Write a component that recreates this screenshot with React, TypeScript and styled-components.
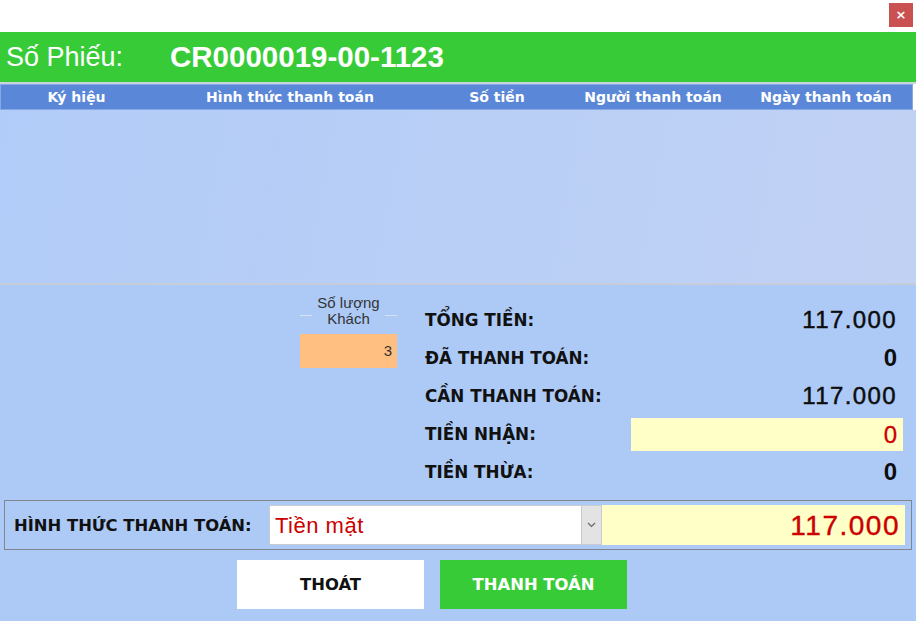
import React from "react";
import styled, { createGlobalStyle } from "styled-components";

const Global = createGlobalStyle`
  html, body { margin: 0; padding: 0; background: #ffffff; }
  body { font-family: "Liberation Sans", Arial, sans-serif; }
  * { box-sizing: border-box; }
`;

const Window = styled.div`
  width: 916px;
  height: 621px;
  display: flex;
  flex-direction: column;
  background: #ffffff;
  overflow: hidden;
`;

const TitleBar = styled.div`
  height: 32px;
  display: flex;
  justify-content: flex-end;
  align-items: flex-start;
  padding: 3px 3px 0 0;
`;

const CloseButton = styled.button`
  width: 24px;
  height: 24px;
  border: none;
  padding: 0;
  background: #c95151;
  color: #ffffff;
  font-family: "DejaVu Sans", sans-serif;
  font-weight: bold;
  font-size: 13px;
  line-height: 24px;
  text-align: center;
`;

const Header = styled.div`
  height: 50px;
  background: #38cb38;
  display: flex;
  align-items: center;
  padding-left: 6px;
  color: #ffffff;
  border-bottom: 2px solid #c9d3dc;
  box-sizing: content-box;
`;

const HeaderLabel = styled.span`
  font-size: 27px;
  width: 164px;
`;

const HeaderValue = styled.span`
  font-size: 29.5px;
  font-weight: bold;
`;

const TableHeader = styled.div`
  height: 26px;
  margin-right: 3px;
  background: #5a87d7;
  border: 1px solid #86a8e6;
  display: grid;
  grid-template-columns: 151px 276px 138px 174px 1fr;
  align-items: center;
`;

const HeadCell = styled.div`
  text-align: center;
  color: #ffffff;
  font-family: "DejaVu Sans", sans-serif;
  font-weight: bold;
  font-size: 14px;
  line-height: 24px;
`;

const TableBody = styled.div`
  height: 173px;
  background: linear-gradient(100deg, #b1ccf8 0%, #b9cff6 50%, #c1d1f4 100%);
  border-bottom: 2px solid #c6ccd8;
  box-sizing: content-box;
`;

const Panel = styled.div`
  flex: 1;
  background: #adcaf7;
  display: flex;
  flex-direction: column;
  padding-top: 10px;
`;

const Summary = styled.div`
  display: flex;
  align-items: flex-start;
  padding-left: 300px;
  padding-right: 13px;
`;

const QtyGroup = styled.div`
  width: 97px;
  display: flex;
  flex-direction: column;
  align-items: stretch;
`;

const QtyTitle = styled.div`
  position: relative;
  text-align: center;
  font-size: 15px;
  line-height: 16px;
  color: #333333;
  &::before, &::after {
    content: "";
    position: absolute;
    top: 20px;
    width: 12px;
    height: 1px;
    background: #d8e2f2;
  }
  &::before { left: 0; }
  &::after { right: 0; }
`;

const QtyInput = styled.div`
  margin-top: 7px;
  height: 34px;
  background: #ffbf80;
  color: #333333;
  font-size: 15px;
  text-align: right;
  padding: 8px 5px 0 0;
`;

const Totals = styled.div`
  flex: 1;
  margin-left: 28px;
  margin-top: 6px;
  display: flex;
  flex-direction: column;
`;

const TotalRow = styled.div`
  height: 38px;
  display: flex;
  align-items: center;
  justify-content: space-between;
`;

const TotalLabel = styled.span`
  font-family: "DejaVu Sans", sans-serif;
  font-weight: bold;
  font-size: 16.8px;
  color: #111111;
`;

const TotalValue = styled.span<{ $bold?: boolean }>`
  width: 272px;
  text-align: right;
  padding-right: 6px;
  font-size: 24px;
  letter-spacing: ${(p) => (p.$bold ? "0" : "1.4px")};
  font-weight: ${(p) => (p.$bold ? "bold" : "normal")};
  -webkit-text-stroke: ${(p) => (p.$bold ? "0" : "0.5px")};
  color: #0d0d0d;
`;

const YellowField = styled.div`
  width: 272px;
  height: 33px;
  background: #ffffc7;
  color: #cc0000;
  font-size: 24px;
  -webkit-text-stroke: 0.3px;
  text-align: right;
  padding: 3px 6px 0 0;
`;

const PayBox = styled.div`
  margin: 9px 4px 0 4px;
  height: 50px;
  border: 1px solid #7f8690;
  display: flex;
  align-items: center;
  padding: 0 6px 0 9px;
`;

const PayLabel = styled.span`
  width: 255px;
  font-family: "DejaVu Sans", sans-serif;
  font-weight: bold;
  font-size: 16.4px;
  color: #111111;
`;

const Select = styled.div`
  width: 333px;
  height: 40px;
  background: #ffffff;
  border: 1px solid #c8ccd2;
  display: flex;
  align-items: stretch;
`;

const SelectText = styled.span`
  flex: 1;
  color: #cc0000;
  font-size: 22px;
  letter-spacing: 0.5px;
  padding: 7px 0 0 5px;
`;

const SelectArrow = styled.span`
  width: 20px;
  background: #e3e3e3;
  border-left: 1px solid #c8c8c8;
  display: flex;
  align-items: center;
  justify-content: center;
`;

const AmountField = styled.div`
  flex: 1;
  height: 40px;
  background: #ffffc7;
  color: #cc0000;
  font-size: 28px;
  letter-spacing: 1.5px;
  -webkit-text-stroke: 0.4px;
  text-align: right;
  padding: 5px 5px 0 0;
`;

const Actions = styled.div`
  display: flex;
  gap: 16px;
  padding-left: 237px;
  margin-top: 10px;
`;

const ActionButton = styled.button<{ $primary?: boolean }>`
  width: 187px;
  height: 49px;
  border: none;
  background: ${(p) => (p.$primary ? "#38cb38" : "#ffffff")};
  color: ${(p) => (p.$primary ? "#ffffff" : "#111111")};
  font-family: "DejaVu Sans", sans-serif;
  font-weight: bold;
  font-size: 16.4px;
  padding: 0;
`;

const columns = ["Ký hiệu", "Hình thức thanh toán", "Số tiền", "Người thanh toán", "Ngày thanh toán"];

export default function App() {
  return (
    <>
      <Global />
      <Window>
        <TitleBar>
          <CloseButton>×</CloseButton>
        </TitleBar>
        <Header>
          <HeaderLabel>Số Phiếu:</HeaderLabel>
          <HeaderValue>CR0000019-00-1123</HeaderValue>
        </Header>
        <TableHeader>
          {columns.map((c) => (
            <HeadCell key={c}>{c}</HeadCell>
          ))}
        </TableHeader>
        <TableBody />
        <Panel>
          <Summary>
            <QtyGroup>
              <QtyTitle>
                Số lượng
                <br />
                Khách
              </QtyTitle>
              <QtyInput>3</QtyInput>
            </QtyGroup>
            <Totals>
              <TotalRow>
                <TotalLabel>TỔNG TIỀN:</TotalLabel>
                <TotalValue>117.000</TotalValue>
              </TotalRow>
              <TotalRow>
                <TotalLabel>ĐÃ THANH TOÁN:</TotalLabel>
                <TotalValue $bold>0</TotalValue>
              </TotalRow>
              <TotalRow>
                <TotalLabel>CẦN THANH TOÁN:</TotalLabel>
                <TotalValue>117.000</TotalValue>
              </TotalRow>
              <TotalRow>
                <TotalLabel>TIỀN NHẬN:</TotalLabel>
                <YellowField>0</YellowField>
              </TotalRow>
              <TotalRow>
                <TotalLabel>TIỀN THỪA:</TotalLabel>
                <TotalValue $bold>0</TotalValue>
              </TotalRow>
            </Totals>
          </Summary>
          <PayBox>
            <PayLabel>HÌNH THỨC THANH TOÁN:</PayLabel>
            <Select>
              <SelectText>Tiền mặt</SelectText>
              <SelectArrow>
                <svg width="9" height="6" viewBox="0 0 9 6">
                  <path d="M1 1 L4.5 4.5 L8 1" fill="none" stroke="#666" strokeWidth="1.2" />
                </svg>
              </SelectArrow>
            </Select>
            <AmountField>117.000</AmountField>
          </PayBox>
          <Actions>
            <ActionButton>THOÁT</ActionButton>
            <ActionButton $primary>THANH TOÁN</ActionButton>
          </Actions>
        </Panel>
      </Window>
    </>
  );
}
